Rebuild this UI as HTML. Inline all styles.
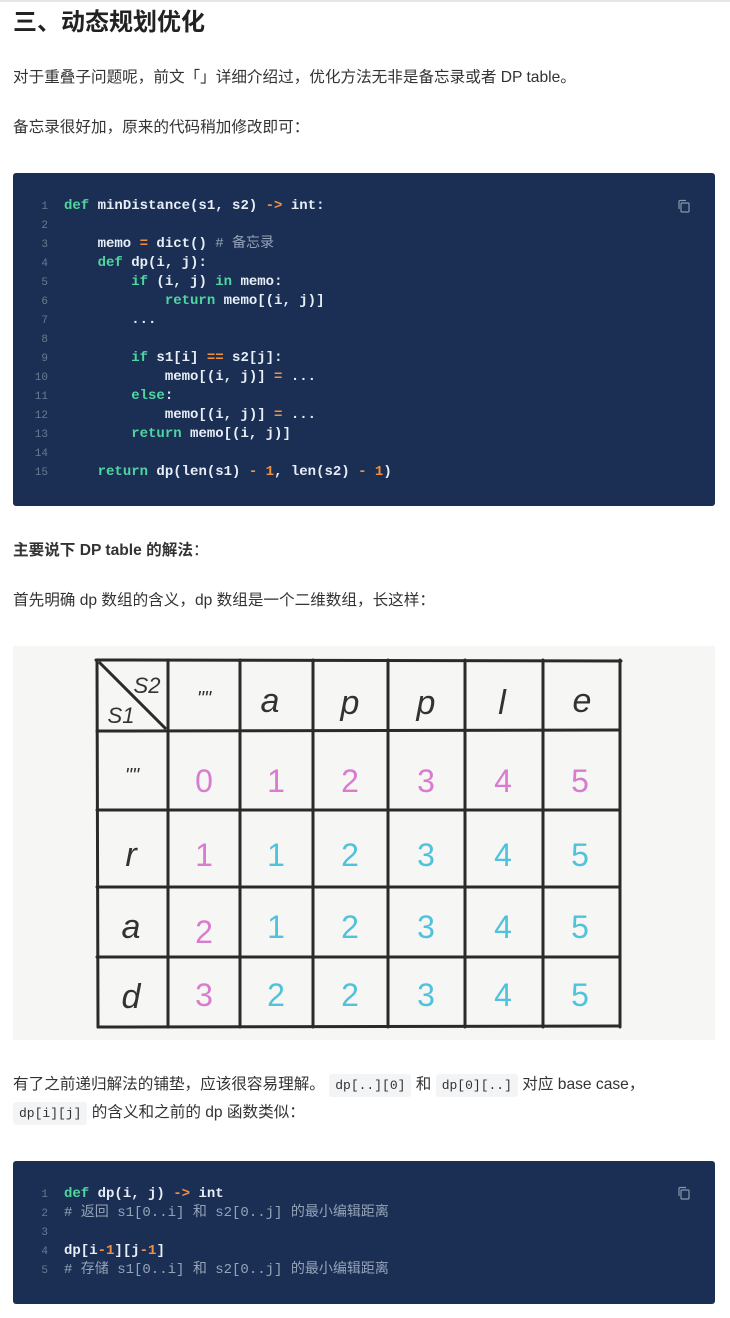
<!DOCTYPE html>
<html><head><meta charset="utf-8"><style>
*{margin:0;padding:0;box-sizing:border-box}
body{width:730px;height:1318px;background:#fff;position:relative;overflow:hidden;font-family:"Liberation Sans","Noto Sans CJK SC",sans-serif;color:#333}
.topline{position:absolute;left:0;top:0;width:730px;height:2px;background:#e6e6e6}
.t{position:absolute;left:13px;font-size:15.6px;white-space:nowrap;line-height:22px}
h2{position:absolute;left:13px;top:6px;font-size:24px;font-weight:bold;color:#222;line-height:34px}
.code{position:absolute;left:13px;width:702px;background:#1b2f55;border-radius:3px}
.ln{position:absolute;left:28px;width:20px;text-align:right;color:#6a7a90;font-family:"Liberation Mono",monospace;font-size:11px}
.cl{position:absolute;left:64px;font-family:"Liberation Mono","Noto Sans CJK SC",monospace;font-size:14px;color:#e8eef6;font-weight:bold;white-space:pre;line-height:19px}
.k{color:#4fd6a0}.o{color:#f3903f}.c{color:#95a3b8;font-weight:normal}
.copy{position:absolute;right:24px;width:14px;height:14px}
.ic{background:#f3f4f6;border-radius:3px;font-family:"Liberation Mono",monospace;font-size:13px;padding:4px 6px;color:#333}
</style></head><body>
<div class="topline"></div>
<h2>三、动态规划优化</h2>
<div class="t" style="top:67px">对于重叠子问题呢，前文「」详细介绍过，优化方法无非是备忘录或者 DP table。</div>
<div class="t" style="top:117px">备忘录很好加，原来的代码稍加修改即可：</div>

<div class="code" style="top:173px;height:333px">
<svg class="copy" style="top:26px" viewBox="0 0 14 14" fill="none" stroke="#8896aa" stroke-width="1.2"><rect x="4" y="4" width="8" height="9" rx="1"/><path d="M2 10V2.5A1 1 0 0 1 3 1.5h6"/></svg>
</div>
<div style="position:absolute;left:0;top:0">
<div class="ln" style="top:201px">1</div><div class="cl" style="top:197px"><span class="k">def</span> minDistance(s1, s2) <span class="o">-&gt;</span> int:</div>
<div class="ln" style="top:220px">2</div>
<div class="ln" style="top:239px">3</div><div class="cl" style="top:235px">    memo <span class="o">=</span> dict() <span class="c"># 备忘录</span></div>
<div class="ln" style="top:258px">4</div><div class="cl" style="top:254px">    <span class="k">def</span> dp(i, j):</div>
<div class="ln" style="top:277px">5</div><div class="cl" style="top:273px">        <span class="k">if</span> (i, j) <span class="k">in</span> memo:</div>
<div class="ln" style="top:296px">6</div><div class="cl" style="top:292px">            <span class="k">return</span> memo[(i, j)]</div>
<div class="ln" style="top:315px">7</div><div class="cl" style="top:311px">        ...</div>
<div class="ln" style="top:334px">8</div>
<div class="ln" style="top:353px">9</div><div class="cl" style="top:349px">        <span class="k">if</span> s1[i] <span class="o">==</span> s2[j]:</div>
<div class="ln" style="top:372px">10</div><div class="cl" style="top:368px">            memo[(i, j)] <span class="o">=</span> ...</div>
<div class="ln" style="top:391px">11</div><div class="cl" style="top:387px">        <span class="k">else</span>:</div>
<div class="ln" style="top:410px">12</div><div class="cl" style="top:406px">            memo[(i, j)] <span class="o">=</span> ...</div>
<div class="ln" style="top:429px">13</div><div class="cl" style="top:425px">        <span class="k">return</span> memo[(i, j)]</div>
<div class="ln" style="top:448px">14</div>
<div class="ln" style="top:467px">15</div><div class="cl" style="top:463px">    <span class="k">return</span> dp(len(s1) <span class="o">-</span> <span class="o">1</span>, len(s2) <span class="o">-</span> <span class="o">1</span>)</div>
</div>

<div class="t" style="top:540px"><b>主要说下 DP table 的解法</b>：</div>
<div class="t" style="top:590px">首先明确 dp 数组的含义，dp 数组是一个二维数组，长这样：</div>

<svg style="position:absolute;left:13px;top:646px" width="702" height="394" viewBox="13 646 702 394">
<rect x="13" y="646" width="702" height="394" fill="#f6f6f5"/>
<g stroke="#2a2a2a" stroke-width="3" fill="none" stroke-linecap="round">
<path d="M96 660L621 661M97 731L620 730M97 810L619 810M97 887L619 887M97 957L619 957M98 1027L620 1026"/>
<path d="M97 660L98 1027M168 660L168 1027M240 660L240 1027M313 660L313 1027M388 660L388 1027M465 660L465 1027M543 660L543 1027M620 660L620 1027"/>
<path d="M100 663L165 728"/>
</g>
<g font-family="Liberation Sans,sans-serif" font-size="34" fill="#333" text-anchor="middle" font-style="italic">
<text x="147" y="693" font-size="22">S2</text><text x="121" y="723" font-size="22">S1</text>
<text x="204" y="705" font-size="20">""</text>
<text x="270" y="712">a</text><text x="350" y="714">p</text><text x="426" y="714">p</text><text x="502" y="714">l</text><text x="582" y="712">e</text>
<text x="132" y="782" font-size="20">""</text>
<text x="131" y="866">r</text><text x="131" y="938">a</text><text x="131" y="1008">d</text>
</g>
<g font-family="Liberation Sans,sans-serif" font-size="32" text-anchor="middle">
<g fill="#d97bcf"><text x="204" y="792">0</text><text x="276" y="792">1</text><text x="350" y="792">2</text><text x="426" y="792">3</text><text x="503" y="792">4</text><text x="580" y="792">5</text>
<text x="204" y="866">1</text><text x="204" y="943">2</text><text x="204" y="1006">3</text></g>
<g fill="#4fc3dc"><text x="276" y="866">1</text><text x="350" y="866">2</text><text x="426" y="866">3</text><text x="503" y="866">4</text><text x="580" y="866">5</text>
<text x="276" y="938">1</text><text x="350" y="938">2</text><text x="426" y="938">3</text><text x="503" y="938">4</text><text x="580" y="938">5</text>
<text x="276" y="1006">2</text><text x="350" y="1006">2</text><text x="426" y="1006">3</text><text x="503" y="1006">4</text><text x="580" y="1006">5</text></g>
</g>
</svg>

<div class="t" style="top:1074px">有了之前递归解法的铺垫，应该很容易理解。 <span class="ic">dp[..][0]</span> 和 <span class="ic">dp[0][..]</span> 对应 base case，</div>
<div class="t" style="top:1102px"><span class="ic">dp[i][j]</span> 的含义和之前的 dp 函数类似：</div>

<div class="code" style="top:1161px;height:143px">
<svg class="copy" style="top:25px" viewBox="0 0 14 14" fill="none" stroke="#8896aa" stroke-width="1.2"><rect x="4" y="4" width="8" height="9" rx="1"/><path d="M2 10V2.5A1 1 0 0 1 3 1.5h6"/></svg>
</div>
<div class="ln" style="top:1189px">1</div><div class="cl" style="top:1185px"><span class="k">def</span> dp(i, j) <span class="o">-&gt;</span> int</div>
<div class="ln" style="top:1208px">2</div><div class="cl" style="top:1204px"><span class="c"># 返回 s1[0..i] 和 s2[0..j] 的最小编辑距离</span></div>
<div class="ln" style="top:1227px">3</div>
<div class="ln" style="top:1246px">4</div><div class="cl" style="top:1242px">dp[i<span class="o">-1</span>][j<span class="o">-1</span>]</div>
<div class="ln" style="top:1265px">5</div><div class="cl" style="top:1261px"><span class="c"># 存储 s1[0..i] 和 s2[0..j] 的最小编辑距离</span></div>
</body></html>
